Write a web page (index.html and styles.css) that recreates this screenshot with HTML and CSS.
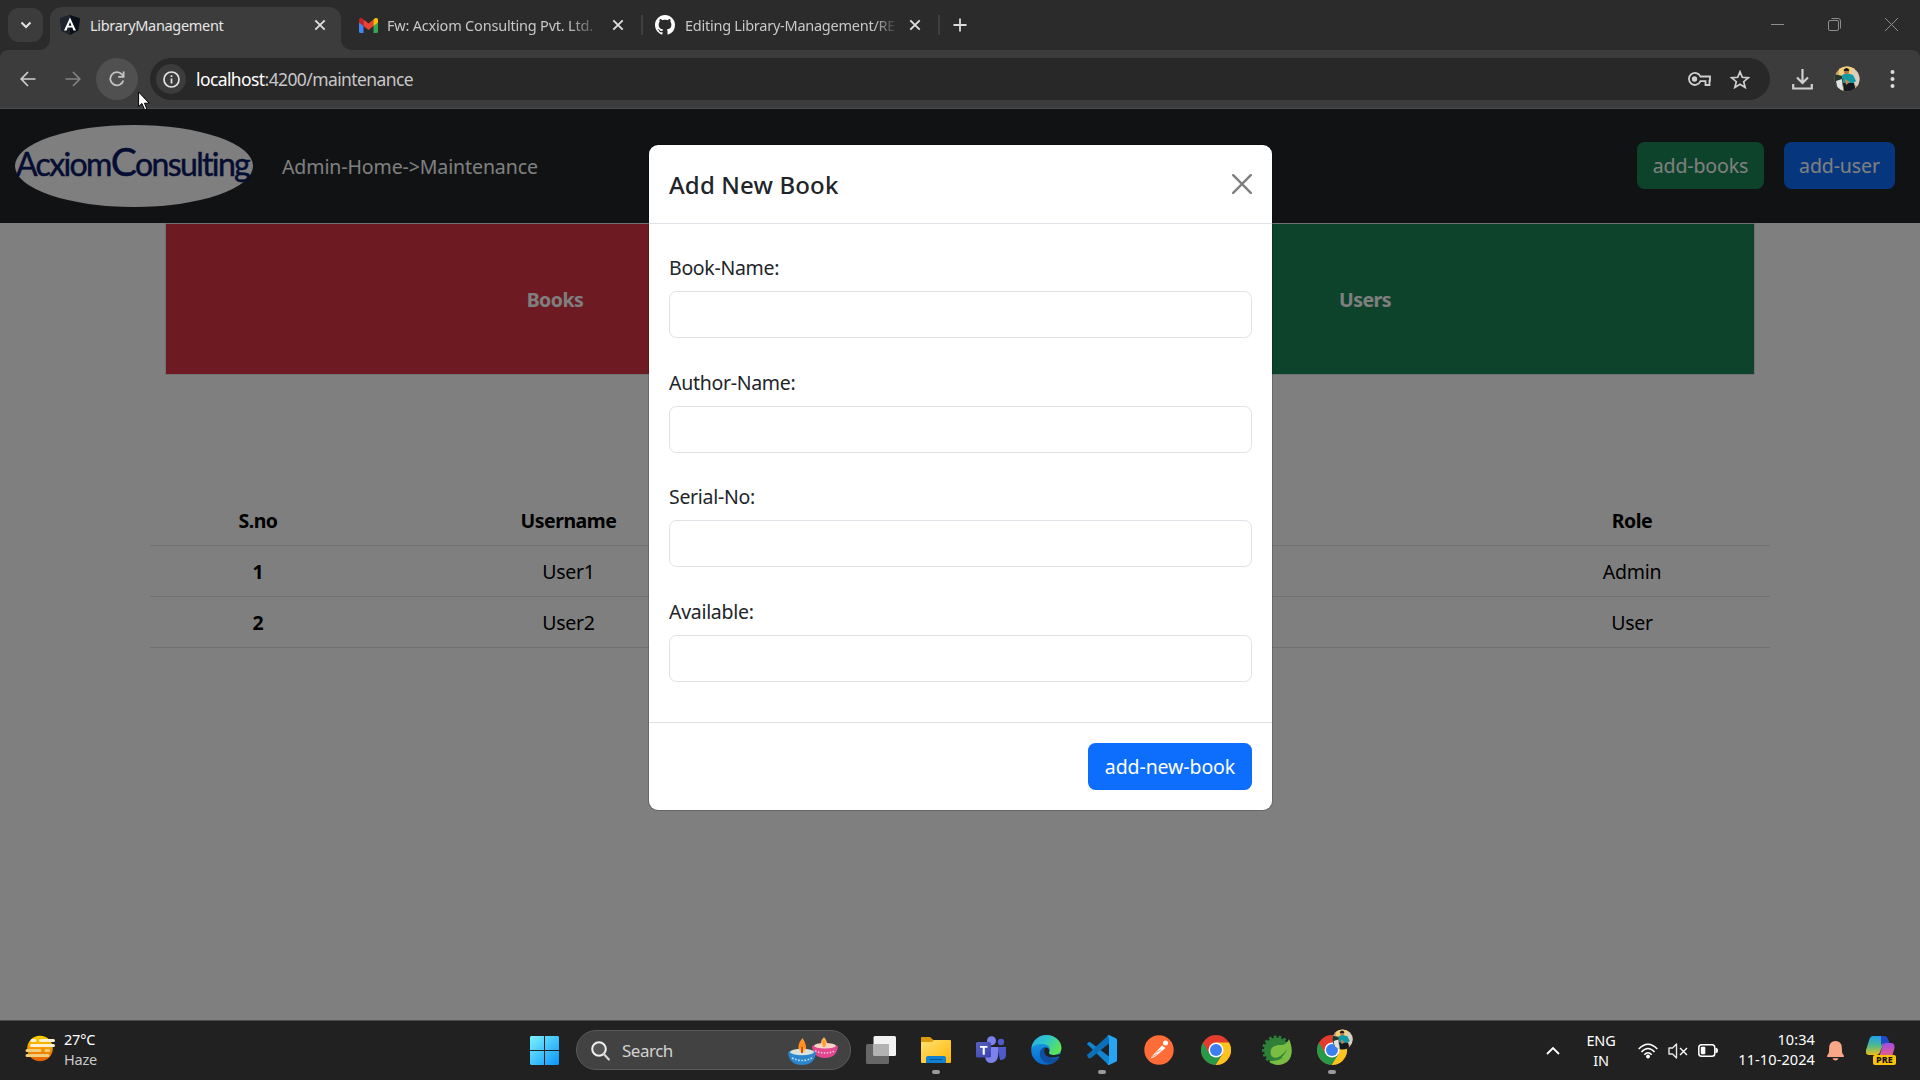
FILE: index.html
```html
<!DOCTYPE html>
<html lang="en">
<head>
<meta charset="utf-8">
<title>LibraryManagement</title>
<link rel="stylesheet" href="styles.css">
</head>
<body>
<svg class="defs" width="0" height="0" aria-hidden="true">
  <defs>
    <linearGradient id="sun" x1="0" y1="0" x2="0" y2="1"><stop offset="0" stop-color="#ffd400"/><stop offset="1" stop-color="#e65c00"/></linearGradient>
    <linearGradient id="win" x1="0" y1="0" x2="1" y2="1"><stop offset="0" stop-color="#7bf3ff"/><stop offset="1" stop-color="#0c94fa"/></linearGradient>
    <linearGradient id="folder" x1="0" y1="0" x2="1" y2="1"><stop offset="0" stop-color="#ffe074"/><stop offset="1" stop-color="#ffb700"/></linearGradient>
    <linearGradient id="edgeTop" x1="0" y1="0" x2="1" y2=".5"><stop offset="0" stop-color="#2aa8e8"/><stop offset=".5" stop-color="#30c6cb"/><stop offset="1" stop-color="#5be457"/></linearGradient>
    <linearGradient id="edgeBody" x1="0" y1="0" x2="0" y2="1"><stop offset="0" stop-color="#1fa5e6"/><stop offset="1" stop-color="#0668cf"/></linearGradient>
    <linearGradient id="teams" x1="0" y1="0" x2="1" y2="1"><stop offset="0" stop-color="#5a62c3"/><stop offset="1" stop-color="#3940ab"/></linearGradient>
    <linearGradient id="copA" x1="0" y1="0" x2="0" y2="1"><stop offset="0" stop-color="#1f9fee"/><stop offset=".5" stop-color="#4fb98d"/><stop offset="1" stop-color="#ecc218"/></linearGradient>
    <linearGradient id="copB" x1="0" y1="0" x2="0" y2="1"><stop offset="0" stop-color="#a24be8"/><stop offset="1" stop-color="#f8636e"/></linearGradient>
    <linearGradient id="flame" x1="0" y1="0" x2="0" y2="1"><stop offset="0" stop-color="#ffa02e"/><stop offset=".6" stop-color="#ff8a1c"/><stop offset="1" stop-color="#ffd06a"/></linearGradient>
    <clipPath id="round"><circle cx="13" cy="13" r="12.5"/></clipPath>
    <symbol id="avatar" viewBox="0 0 26 26">
      <g clip-path="url(#round)">
        <rect width="26" height="26" fill="#c9a878"/>
        <path d="M5 0h16v9H5z" fill="#f4cf77"/>
        <path d="M18 3l8 3v16l-7-4z" fill="#d9cfc0"/>
        <path d="M0 8l8 2 2 8-5 8H0z" fill="#24352c"/>
        <path d="M2 15l6-2 1 11-5 1z" fill="#dfe3e4"/>
        <path d="M8 9l5-2 6 2 3 6-4 3-8 0z" fill="#109aa6"/>
        <circle cx="12.5" cy="5.5" r="2.6" fill="#b5764e"/>
        <path d="M9.500 4q3-4 6 0l-1 1h-4z" fill="#171717"/>
        <path d="M9 17h11l2 9H10z" fill="#141a1f"/>
        <path d="M11 13l5 3-4 3z" fill="#c48553"/>
      </g>
    </symbol>
    <symbol id="chrome" viewBox="0 0 30 30">
      <circle cx="15" cy="15" r="15" fill="#e33b2e"/>
      <path d="M15 7.500H28A15 15 0 0 1 14.500 30L21.500 18.700z" fill="#fcc31e"/>
      <path d="M2 7.500A15 15 0 0 0 14.500 30L21.500 18.700 15 22 8.500 18.700z" fill="#269a48"/>
      <circle cx="15" cy="15" r="7.500" fill="#fff"/>
      <circle cx="15" cy="15" r="6" fill="#3c7ff0"/>
    </symbol>
    <symbol id="cross" viewBox="0 0 12 12"><path d="M1.300 1.300l9.400 9.400M10.700 1.300l-9.400 9.400" stroke="currentColor" stroke-width="1.900" fill="none"/></symbol>
  </defs>
</svg>

<div class="screen">
  <header class="tabstrip">
    <div class="tab-search"><svg width="12" height="8" viewBox="0 0 12 8"><path d="M1.500 1.500L6 6l4.500-4.500" fill="none" stroke="#e3e3e3" stroke-width="2"/></svg></div>
    <div class="tab active">
      <svg width="20" height="20" viewBox="0 0 20 20"><path d="M10 0l10 3.200-1.500 12.300L10 20 1.500 15.500 0 3.200z" fill="#0b0f18"/><path d="M10 0v20l-8.500-4.500L0 3.200z" fill="#20242e"/><path d="M10 2.500L4 15.500h2.500l1.200-3h4.600l1.200 3H16zM10 7l1.500 3.700h-3z" fill="#fff"/></svg>
      <span class="tab-title">LibraryManagement</span>
      <svg class="tab-close" width="12" height="12"><use href="#cross"/></svg>
    </div>
    <div class="tab second">
      <svg width="19" height="15" viewBox="0 0 19 15"><path d="M0 2h4.500v13H1.500A1.500 1.500 0 0 1 0 13.500z" fill="#4285f4"/><path d="M14.500 2H19v11.500a1.500 1.500 0 0 1-1.500 1.500h-3z" fill="#34a853"/><path d="M4.500 1.500l5 4 5-4V8l-5 4-5-4z" fill="#ea4335"/><path d="M0 2C0 0 2 -.5 3.300.5l1.200 1V8L0 4.500z" fill="#c5221f"/><path d="M19 2c0-2-2-2.500-3.300-1.500l-1.200 1V8L19 4.500z" fill="#fbbc04"/></svg>
      <span class="tab-title mail">Fw: Acxiom Consulting Pvt. Ltd.</span>
      <svg class="tab-close" width="12" height="12"><use href="#cross"/></svg>
    </div>
    <i class="tab-sep"></i>
    <div class="tab third">
      <svg width="20" height="20" viewBox="0 0 16 16"><path fill="#fff" d="M8 0C3.580 0 0 3.580 0 8c0 3.540 2.290 6.530 5.470 7.590.4.070.55-.17.55-.38 0-.19-.01-.82-.01-1.490-2.010.37-2.530-.49-2.690-.94-.09-.23-.48-.94-.82-1.130-.28-.15-.68-.52-.01-.53.63-.01 1.080.58 1.230.82.72 1.210 1.870.87 2.330.66.070-.52.28-.87.51-1.070-1.780-.2-3.640-.89-3.640-3.950 0-.87.31-1.590.82-2.150-.08-.2-.36-1.020.08-2.120 0 0 .67-.21 2.200.82.64-.18 1.320-.27 2-.27s1.360.09 2 .27c1.530-1.040 2.200-.82 2.200-.82.44 1.100.16 1.920.08 2.120.51.56.82 1.270.82 2.150 0 3.070-1.870 3.750-3.650 3.950.29.25.54.73.54 1.480 0 1.070-.01 1.930-.01 2.200 0 .21.15.46.55.38A8.010 8.010 0 0 0 16 8c0-4.420-3.580-8-8-8z"/></svg>
      <span class="tab-title repo">Editing Library-Management/RE</span>
      <svg class="tab-close" width="12" height="12"><use href="#cross"/></svg>
    </div>
    <i class="tab-sep last"></i>
    <svg class="new-tab" width="14" height="14" viewBox="0 0 14 14"><path d="M7 .5v13M.5 7h13" stroke="#dadada" stroke-width="1.800"/></svg>
    <div class="win-controls">
      <svg width="13" height="13" viewBox="0 0 13 13"><path d="M0 6.500h13" stroke="#8e8e8e"/></svg>
      <svg width="13" height="13" viewBox="0 0 13 13"><rect x=".5" y="2.500" width="10" height="10" rx="1.500" fill="none" stroke="#8e8e8e"/><path d="M3.500.5H10A2.500 2.500 0 0 1 12.500 3v7.500" fill="none" stroke="#8e8e8e"/></svg>
      <svg width="13" height="13" viewBox="0 0 13 13"><path d="M0 0l13 13M13 0L0 13" stroke="#8e8e8e"/></svg>
    </div>
  </header>

  <div class="toolbar">
    <svg class="back" width="16" height="16" viewBox="0 0 16 16"><path d="M15.500 8H1.500M8 1L1.200 8 8 15" fill="none" stroke="#cfcfcf" stroke-width="1.700"/></svg>
    <svg class="forward" width="16" height="16" viewBox="0 0 16 16"><path d="M.5 8h14M8 1l6.800 7L8 15" fill="none" stroke="#828282" stroke-width="1.700"/></svg>
    <div class="reload"><svg width="16" height="16" viewBox="0 0 16 16"><path d="M14.300 9.500A6.600 6.600 0 1 1 12.900 3.400L14.500 5.200" fill="none" stroke="#c4c4c4" stroke-width="1.800"/><path d="M14.600.4v5.400H9.200" fill="none" stroke="#c4c4c4" stroke-width="1.800"/></svg></div>
    <div class="omnibox">
      <div class="site-info"><svg width="17" height="17" viewBox="0 0 17 17"><circle cx="8.500" cy="8.500" r="7.500" fill="none" stroke="#e3e3e3" stroke-width="1.700"/><path d="M8.500 7.500v5M8.500 4.200v1.900" stroke="#e3e3e3" stroke-width="1.700"/></svg></div>
      <div class="url"><b>localhost</b>:4200/maintenance</div>
      <svg class="key" width="23" height="14" viewBox="0 0 23 14"><path d="M12.400 4.500H22v4.200h-.5V13h-4V9.200h-5A6 6 0 1 1 12.400 4.500z" fill="none" stroke="#cfcfcf" stroke-width="1.800"/><circle cx="6.500" cy="7" r="2.700" fill="#cfcfcf"/></svg>
      <svg class="star" width="20" height="19" viewBox="0 0 20 19"><path d="M10 1.800l2.300 5.500 6 .5-4.600 3.900 1.500 5.800L10 14.300l-5.200 3.200 1.500-5.800L1.700 7.800l6-.5z" fill="none" stroke="#cfcfcf" stroke-width="1.700"/></svg>
    </div>
    <svg class="download" width="21" height="21" viewBox="0 0 21 21"><path d="M10.500 0v14M5 8.500l5.500 5.500L16 8.500M1.200 15v4.500h18.600V15" fill="none" stroke="#cfcfcf" stroke-width="2.200"/></svg>
    <svg class="profile" width="26" height="26"><use href="#avatar"/></svg>
    <svg class="dots" width="5" height="18" viewBox="0 0 5 18"><g fill="#dcdcdc"><circle cx="2.500" cy="2" r="2"/><circle cx="2.500" cy="9" r="2"/><circle cx="2.500" cy="16" r="2"/></g></svg>
  </div>

  <main class="page">
    <nav class="navbar">
      <div class="logo"><span>Acxiom<big>C</big>onsulting</span></div>
      <span class="crumb">Admin-Home-&gt;Maintenance</span>
      <button class="btn green">add-books</button>
      <button class="btn blue">add-user</button>
    </nav>
    <div class="cards">
      <div class="card red">Books</div>
      <div class="card teal">Users</div>
    </div>
    <div class="table">
      <div class="row head"><span>S.no</span><span>Username</span><span></span><span>Role</span></div>
      <div class="row"><b>1</b><span>User1</span><span></span><span>Admin</span></div>
      <div class="row"><b>2</b><span>User2</span><span></span><span>User</span></div>
    </div>

    <div class="backdrop">
      <form class="modal">
        <div class="modal-head"><h5>Add New Book</h5><svg width="20" height="20" viewBox="0 0 20 20"><path d="M1.200 1.200l17.600 17.600M18.800 1.200L1.200 18.800" stroke="#7f7f7f" stroke-width="2.400" stroke-linecap="round"/></svg></div>
        <div class="modal-body">
          <label>Book-Name:<input type="text"></label>
          <label>Author-Name:<input type="text"></label>
          <label>Serial-No:<input type="text"></label>
          <label>Available:<input type="text"></label>
        </div>
        <div class="modal-foot"><button type="button" class="btn blue">add-new-book</button></div>
      </form>
    </div>
  </main>

  <footer class="taskbar">
    <svg class="weather-icon" width="31" height="27" viewBox="0 0 31 27"><circle cx="15" cy="13.500" r="12.800" fill="url(#sun)"/><g stroke-linecap="round" stroke-width="3"><path d="M7 5.500h3M15.500 5.500h13M6.500 10.500h22" stroke="#fff3cf"/><path d="M2 15.500h13M21 15.500h2.500M2 20.500h21" stroke="#f1cd7c"/></g></svg>
    <div class="weather"><span>27°C</span><span class="dim">Haze</span></div>
    <svg class="start" width="29" height="29" viewBox="0 0 29 29"><path d="M1 0h13v14H0V1zM15 0h13l1 1v13H15zM0 15h14v14H1l-1-1zM15 15h14v13l-1 1H15z" fill="url(#win)"/></svg>
    <div class="search">
      <svg width="19" height="20" viewBox="0 0 19 20"><circle cx="8" cy="8" r="6.800" fill="#555" stroke="#f0f0f0" stroke-width="2"/><path d="M12.800 13l5 5.500" stroke="#d5d5d5" stroke-width="2.200" stroke-linecap="round"/></svg>
      <span>Search</span>
      <svg class="diya" width="50" height="28" viewBox="0 0 50 28"><path d="M36 0q5 6 2 11h-4q-3-6 2-11z" fill="#ffb45a"/><path d="M24 9q13-5 26 0-1 12-13 12T24 9z" fill="#e0488f"/><ellipse cx="37" cy="8.800" rx="11" ry="2.800" fill="#f7d4c5"/><path d="M27 14q10 4 20 0" fill="none" stroke="#ffc1de" stroke-width="1.500" stroke-dasharray="1.500 1.500"/><path d="M36 2q3 5 1 8h-2q-2-4 1-8z" fill="#ff9f30"/><path d="M0 15q14-6 28 0-1 13-14 13T0 15z" fill="#2c85cf"/><ellipse cx="14" cy="15" rx="12" ry="3.200" fill="#d8e3dc"/><path d="M4 21q10 5 20 0" fill="none" stroke="#b5e3ff" stroke-width="1.700" stroke-dasharray="1.700 1.500"/><path d="M14.500 1q6 9 2 14h-4q-5-6 2-14z" fill="url(#flame)"/><path d="M14 10v6" stroke="#d8480c" stroke-width="2"/></svg>
    </div>
    <div class="apps">
      <svg width="30" height="28" viewBox="0 0 30 28"><rect y="8" width="23" height="20" rx="1.500" fill="#666"/><rect x="7.500" y="0" width="22.500" height="20" rx="1.500" fill="#f2f2f2"/><path d="M7.500 8H23v12H9q-1.500 0-1.500-1.500z" fill="#b2b2b2"/></svg>
      <svg width="30" height="28" viewBox="0 0 30 28"><path d="M0 2Q0 1 1 1h8l4 3.500V8H0z" fill="#dd9a0a"/><path d="M0 6h11l2-2h16q1 0 1 1v21q0 1-1 1H1q-1 0-1-1z" fill="url(#folder)"/><path d="M5 27v-5q0-2 2-2h16q2 0 2 2v5z" fill="#1180d3"/><path d="M9 23.500h12" stroke="#0b5394"/></svg>
      <svg width="30" height="28" viewBox="0 0 30 28"><circle cx="25" cy="6" r="3.200" fill="#5059c9"/><path d="M21 11h9v8q0 5-6 5z" fill="#5059c9"/><circle cx="15.500" cy="4.800" r="4.500" fill="#7b83eb"/><path d="M9 11h13v9q-1 7-7 7-5 0-6-6z" fill="#7b83eb"/><rect y="6" width="15" height="15.500" rx="1.500" fill="url(#teams)"/><path d="M4 10h7.500v1.800H8.800v7H6.700v-7H4z" fill="#fff"/></svg>
      <svg width="31" height="30" viewBox="0 0 31 30"><circle cx="15" cy="15" r="14.800" fill="url(#edgeBody)"/><path d="M.5 13C2 4 9 0 15.500 0 24 0 30.500 6 30.500 13c0 5-4 7-8 7-3 0-5-1-4.500-2 2-3 1-9-6-9S2 11 .5 13z" fill="url(#edgeTop)"/><path d="M15 12c-5 0-7 5-6 9 1 5 7 9 13 7 3-1 5-3 6.500-6-4 2-9 2-12-1-2-2-2-4-.5-6z" fill="#104fa0"/><path d="M14.800 12.500c-2 1.500-2.500 6 1 8.500 4 2.500 9 1.500 12.700.2l3 2V19l-8 1c-4 0-6-1-5.500-2.500.6-1.500.5-5-3.200-5z" fill="#212121"/></svg>
      <svg width="30" height="30" viewBox="0 0 30 30"><path d="M0 9q1-2.300 3-2l4 3L22 21.500V30l-1-.5z" fill="#1285d0"/><path d="M0 20l21-19.500 1-.5v8.500L4 23q-1.500 1-3-.500z" fill="#0b70b8"/><path d="M22 0l7 3.200q1 .5 1 1.800v20q0 1.300-1 1.800L22 30q-1 0-1.500-1l1.500-1.500V2.500L20.500 1z" fill="#27a5f2"/></svg>
      <svg width="30" height="30" viewBox="0 0 30 30"><circle cx="15" cy="15" r="14.700" fill="#ff6c37"/><path d="M6.500 23.500l3.500-4.500 8-8.500 3.500 2.500-9 7.500-3 2z" fill="#fff"/><path d="M8 22l5-3M11 18l6-3" stroke="#ff6c37" stroke-width=".7"/><circle cx="21.500" cy="8" r="2.500" fill="#fff"/></svg>
      <svg width="30" height="30"><use href="#chrome"/></svg>
      <svg width="30" height="30" viewBox="0 0 30 30"><circle cx="14.500" cy="15" r="12.500" fill="#2e8038"/><circle cx="14.500" cy="15" r="13" fill="none" stroke="#2e8038" stroke-width="3" stroke-dasharray="2.600 2.250"/><path d="M27 4c4 9 4 18-2 23-7 5-14 3-18-1 6 0 12-1 14-4-5 2-11 1-12-2-2-7 3-10 9-10 5 0 7-2 9-6z" fill="#79bd43"/><path d="M4 23c9 2 16-1 21-9-3 9-10 12-19 11z" fill="#2e8038"/></svg>
      <svg width="36" height="46" viewBox="0 0 36 46"><use href="#chrome" x="0" y="8" width="30" height="30"/><use href="#avatar" x="15" y="2" width="21" height="21"/></svg>
    </div>

    <svg class="tray-up" width="14" height="8" viewBox="0 0 14 8"><path d="M1 7l6-6 6 6" fill="none" stroke="#fff" stroke-width="1.800"/></svg>
    <div class="lang"><span>ENG</span><span>IN</span></div>
    <svg class="wifi" width="20" height="16" viewBox="0 0 20 16"><g fill="none" stroke="#fff" stroke-width="1.500"><path d="M.7 6Q10-3.500 19.300 6"/><path d="M3.500 9Q10 2 16.500 9"/><path d="M6.300 11.800q3.700-4 7.400 0"/></g><circle cx="10" cy="13.500" r="1.900" fill="#fff"/></svg>
    <svg class="mute" width="20" height="16" viewBox="0 0 20 16"><path d="M1 5h3.500l4-4v14l-4-4H1z" fill="none" stroke="#e8e8e8" stroke-width="1.400" stroke-linejoin="round"/><path d="M12 5l7 7M19 5l-7 7" stroke="#fff" stroke-width="1.400"/></svg>
    <svg class="battery" width="20" height="13" viewBox="0 0 20 13"><rect x=".8" y=".8" width="16" height="11.400" rx="2.800" fill="none" stroke="#fff" stroke-width="1.500"/><rect x="2.800" y="2.800" width="4.500" height="7.400" rx="1" fill="#fff"/><path d="M17.500 4h1q1.500 0 1.500 2.500T18.500 9h-1z" fill="#fff"/></svg>
    <div class="clock"><span>10:34</span><span>11-10-2024</span></div>
    <svg class="bell" width="17" height="20" viewBox="0 0 17 20"><path d="M8.500 0Q14.500 0 14.800 6.500L15.200 12l1.600 2.500v1.500H.2v-1.500L1.800 12l.4-5.500Q2.500 0 8.500 0zM5.500 17.200h6q-.8 2.300-3 2.300t-3-2.300z" fill="#faa789"/></svg>
    <div class="copilot">
      <svg width="30" height="24" viewBox="0 0 30 24"><path d="M7 0h10q3 0 2 4l-5 12q-1 3-4 3H3q-4 0-3-5L3.500 3Q4.500 0 7 0z" fill="url(#copA)"/><path d="M15 0h4q2 0 3 3l1.500 4H19q-3 0-4 3z" fill="#2348c9"/><path d="M19 7h6q4 0 3.500 5l-2 7q-1 4-5 4h-9l4-13q1-3 2.500-3z" fill="url(#copB)"/></svg>
      <em>PRE</em>
    </div>
    <i class="run r1"></i><i class="run r2"></i><i class="run r3"></i>
  </footer>

  <svg class="cursor" width="12" height="18" viewBox="0 0 12 18"><path d="M.6 1v14.500l3.300-3 2.600 6H9l-2.500-6.300h4.700z" fill="#fff" stroke="#000" stroke-width="1"/></svg>
</div>
</body>
</html>
```
FILE: styles.css
```css
* { box-sizing: border-box; }
body { margin: 0; background: #202020; font-family: "Noto Sans", "Open Sans", sans-serif; }
svg { display: block; flex: none; }
.defs { position: absolute; }
.screen { position: relative; width: 1920px; height: 1080px; overflow: hidden; display: flex; flex-direction: column; background: #2b2b2b; }

/* browser tabs */
.tabstrip { height: 50px; display: flex; align-items: flex-start; padding: 8px 22px 0 8px; background: #2b2b2b; font-size: 14.5px; color: #c7c7c7; flex: none; }
.tab-search { width: 35px; height: 34px; border-radius: 11px; background: #3c3c3c; display: grid; place-items: center; }
.tab { height: 34px; display: flex; align-items: center; }
.tab.active { position: relative; width: 291px; height: 43px; margin: -1px 0 0 7px; padding: 0 15px 7px 10px; border-radius: 12px 12px 0 0; background: #3c3c3c; color: #e6e6e6; }
.tab.active::before, .tab.active::after { content: ""; position: absolute; bottom: 0; width: 10px; height: 10px; }
.tab.active::before { left: -10px; background: radial-gradient(circle at 0 0, transparent 9.5px, #3c3c3c 10px); }
.tab.active::after { right: -10px; background: radial-gradient(circle at 100% 0, transparent 9.5px, #3c3c3c 10px); }
.tab-title { margin-left: 10px; white-space: nowrap; letter-spacing: -.25px; line-height: 22px; }
.active .tab-title { letter-spacing: -.32px; }
.tab-close { margin-left: auto; color: #dedede; }
.tab.second { width: 265px; margin-left: 18px; }
.tab-title.mail { margin-left: 9px; letter-spacing: -.2px; -webkit-mask-image: linear-gradient(90deg, #000 88%, rgba(0,0,0,.3)); mask-image: linear-gradient(90deg, #000 88%, rgba(0,0,0,.3)); }
.tab-title.repo { -webkit-mask-image: linear-gradient(90deg, #000 90%, rgba(0,0,0,.1)); mask-image: linear-gradient(90deg, #000 90%, rgba(0,0,0,.1)); }
.tab-sep { width: 2px; height: 20px; margin: 7px 12px 0 17px; background: #3f3f3f; }
.tab.third { width: 266px; }
.tab-sep.last { margin: 7px 13px 0 17px; }
.new-tab { margin-top: 10px; }
.win-controls { margin: 10px 0 0 auto; display: flex; gap: 44px; }

/* address bar */
.toolbar { height: 59px; display: flex; align-items: center; padding-left: 20px; background: #3c3c3c; border-bottom: 1px solid #4a4d4d; border-radius: 8px 8px 0 0; flex: none; }
.forward { margin-left: 29px; }
.reload { width: 42px; height: 42px; margin-left: 15px; border-radius: 50%; background: #505050; display: grid; place-items: center; }
.omnibox { width: 1620px; height: 42px; margin-left: 12px; padding: 0 20px 0 6px; border-radius: 21px; background: #282828; display: flex; align-items: center; flex: none; }
.site-info { width: 30px; height: 30px; border-radius: 50%; background: #3c3c3c; display: grid; place-items: center; }
.url { margin-left: 10px; font-size: 17.5px; letter-spacing: -.6px; color: #c7c7c7; }
.url b { font-weight: 400; color: #fff; }
.key { margin-left: auto; }
.star { margin-left: 19px; }
.download { margin-left: 22px; }
.profile { margin-left: 21px; }
.dots { margin-left: 30px; }

/* application page */
.page { position: relative; height: 911px; background: #fff; color: #212529; font-size: 19.5px; letter-spacing: -.1px; line-height: 30px; flex: none; }
.navbar { height: 114px; display: flex; align-items: center; padding: 0 25px 0 15px; background: #212529; color: #fff; }
.logo { width: 238px; height: 82px; border-radius: 50%; background: #fff; display: flex; justify-content: center; font: 32px/73px Lato, sans-serif; letter-spacing: -1.65px; color: #0a1a66; white-space: nowrap; -webkit-text-stroke: .5px #0a1a66; }
.logo span { margin-right: 3px; }
.logo big { font-size: 39px; }
.crumb { margin: 2px auto 0 29px; }
.btn { height: 47px; padding: 1px 0 0; border: 0; border-radius: 7.500px; color: #fff; font: inherit; letter-spacing: inherit; white-space: nowrap; }
.navbar .btn { margin-bottom: 1px; }
.green { width: 127px; margin-right: 20px; background: #198754; }
.blue { width: 111px; background: #0d6efd; }
.cards { width: 1590px; height: 152px; margin: 0 auto; display: grid; grid-template-columns: 1fr 1fr; border: 1px solid #dee2e6; color: #fff; font-weight: 700; letter-spacing: -.5px; }
.card { display: grid; place-items: center; padding-top: 1px; }
.red { background: #dc3545; padding-right: 16px; }
.teal { background: #198754; padding-left: 16px; }
.table { width: 1620px; margin: 120px auto 0; color: #000; }
.row { height: 51px; padding-top: 2px; display: grid; grid-template-columns: 216px 405px 723px 276px; align-items: center; text-align: center; border-bottom: 1px solid #dee2e6; letter-spacing: -.25px; }
.head { font-weight: 700; letter-spacing: -.5px; }
.row b { font-weight: 700; }
.backdrop { position: absolute; inset: 0; background: rgba(0,0,0,.5); display: flex; justify-content: center; align-items: flex-start; padding-top: 36px; }

/* add-book dialog */
.modal { width: 623px; height: 665px; background: #fff; border-radius: 9px; box-shadow: 0 0 0 1px rgba(0,0,0,.18); display: flex; flex-direction: column; margin-left: 1px; }
.modal-head { height: 79px; padding: 2px 20px 0; display: flex; align-items: center; justify-content: space-between; border-bottom: 1px solid #dee2e6; }
.modal-head svg { margin-top: -3px; }
h5 { margin: 0; font-size: 24px; font-weight: 500; letter-spacing: .15px; }
.modal-body { height: 498px; padding: 29px 20px 0; display: flex; flex-direction: column; gap: 29.700px; letter-spacing: -.3px; }
.modal-body label { display: flex; flex-direction: column; gap: 8px; }
.modal-body input { width: 583px; height: 47px; border: 1px solid #dee2e6; border-radius: 7.500px; background: #fff; }
.modal-foot { flex: 1; padding: 20px; display: flex; justify-content: flex-end; border-top: 1px solid #dee2e6; }
.modal-foot .btn { width: 164px; }

/* taskbar */
.taskbar { position: relative; height: 60px; border-top: 1px solid #4a4a4a; background: #212121; color: #fff; display: flex; align-items: center; padding-left: 25px; font-size: 14.500px; letter-spacing: -.2px; line-height: 20px; flex: none; }
.weather-icon { margin-top: -4px; }
.weather { width: 60px; margin: -3px 0 0 8px; display: grid; }
.dim { color: #c9c9c9; }
.start { margin-left: 406px; }
.search { width: 275px; height: 40px; margin: -1px 15px 0 17px; padding: 1px 12px 0 14px; border: 1px solid #5a5a5a; border-radius: 20px; background: #424242; display: flex; align-items: center; gap: 12px; color: #d2d2d2; font-size: 17px; letter-spacing: -.5px; }
.diya { margin-left: auto; }
.apps { height: 46px; margin-top: -2px; display: grid; grid-template-columns: 55px 55px 55px 56px 57px 57px 61px 55px 36px; align-items: center; }
.tray-up { margin-left: auto; }
.lang { width: 36px; margin: -1px 0 0 23px; text-align: center; display: grid; }
.wifi { margin-left: 19px; }
.mute { margin-left: 10px; }
.battery { margin-left: 10px; }
.clock { width: 97px; margin-top: -3px; text-align: right; display: grid; letter-spacing: .1px; }
.bell { margin-left: 12px; }
.copilot { position: relative; width: 30px; height: 29px; margin: 0 24px 0 22px; }
.copilot em { position: absolute; right: 0; bottom: 0; width: 23px; height: 10px; border-radius: 2px; background: #ffc20a; color: #111; font: 800 9px/10px "Noto Sans", sans-serif; letter-spacing: .1px; text-align: center; }
.run { position: absolute; top: 49px; width: 8px; height: 4px; border-radius: 2px; background: #9a9a9a; }
.r1 { left: 932px; }
.r2 { left: 1098px; }
.r3 { left: 1328px; }
.cursor { position: absolute; left: 138px; top: 91px; }
```
